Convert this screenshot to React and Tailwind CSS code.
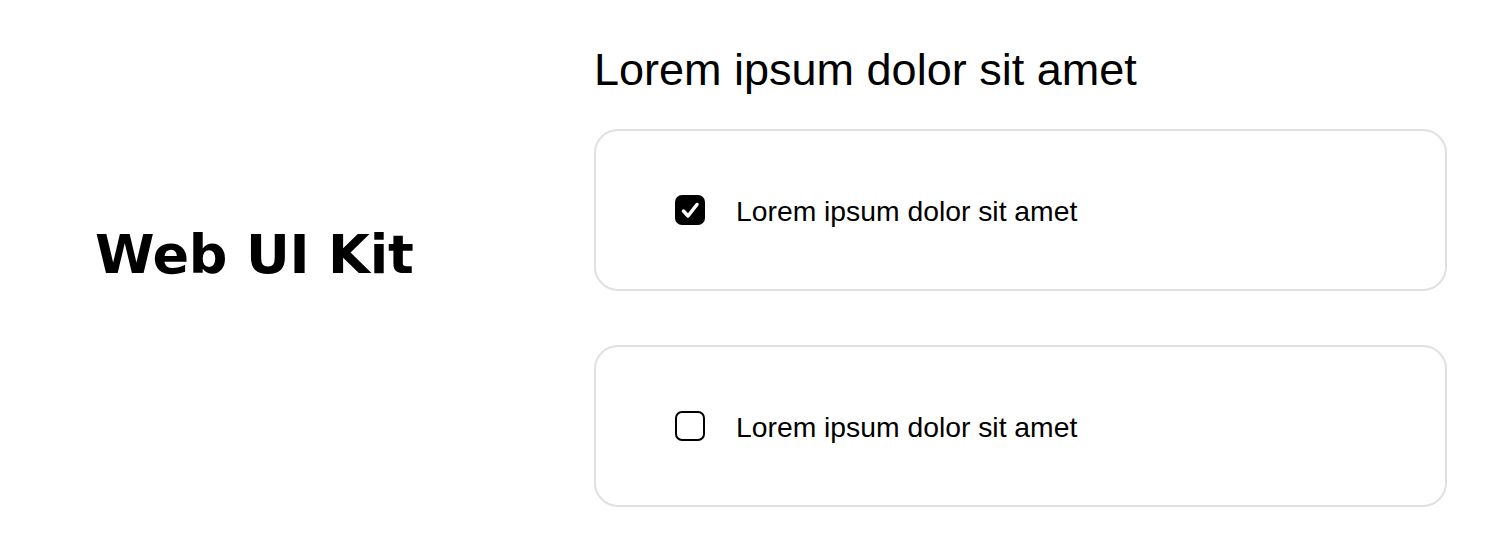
export default function App() {
  const items = [
    { checked: true, label: "Lorem ipsum dolor sit amet" },
    { checked: false, label: "Lorem ipsum dolor sit amet" },
  ];
  return (
    <div className="w-[1500px] h-[550px] bg-white flex text-black" style={{ fontFamily: '"Liberation Sans", Arial, sans-serif' }}>
      <div className="w-[594px] pl-[95px] pt-[228px]">
        <h1 className="text-[54px] leading-none font-bold tracking-[-0.2px] whitespace-nowrap" style={{ fontFamily: '"DejaVu Sans", sans-serif' }}>
          Web UI Kit
        </h1>
      </div>
      <div className="w-[853px] pt-[47px] flex flex-col">
        <h2 className="text-[45px] leading-[45px] font-normal whitespace-nowrap">Lorem ipsum dolor sit amet</h2>
        <div className="mt-[37px] flex flex-col gap-[54px]">
          {items.map((it, i) => (
            <div key={i} className="h-[162px] rounded-[24px] border-2 border-[#e0e0e0] flex items-center pl-[79px]">
              {it.checked ? (
                <div className="w-[30px] h-[30px] rounded-[7px] bg-black">
                  <svg width="30" height="30" viewBox="0 0 30 30" fill="none">
                    <path d="M8.5 16l4.5 5L22 9.5" stroke="white" strokeWidth="3.5" strokeLinecap="round" strokeLinejoin="round" />
                  </svg>
                </div>
              ) : (
                <div className="w-[30px] h-[30px] rounded-[7px] border-[2.5px] border-black bg-white" />
              )}
              <span className="ml-[31px] mt-[3px] text-[28.3px] leading-none whitespace-nowrap">{it.label}</span>
            </div>
          ))}
        </div>
      </div>
    </div>
  );
}
